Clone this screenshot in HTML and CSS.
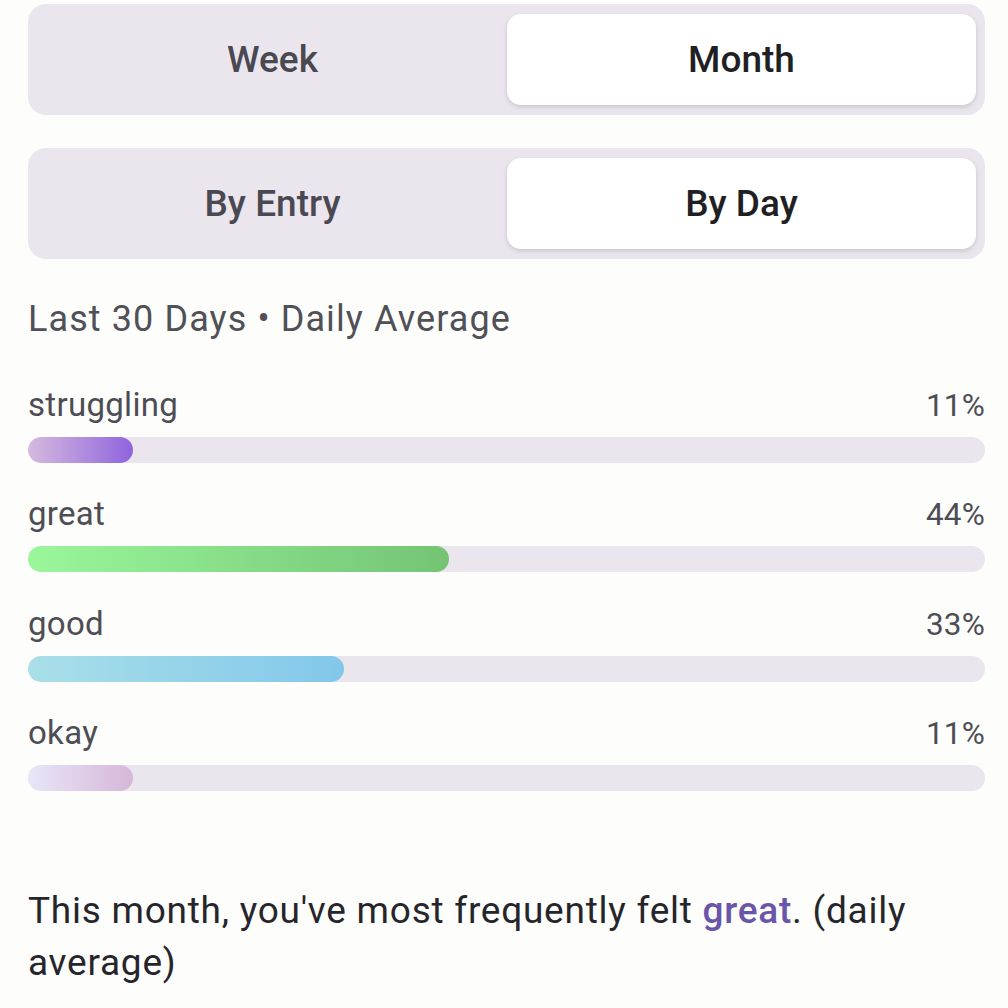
FILE: index.html
```html
<!DOCTYPE html>
<html lang="en">
<head>
<meta charset="utf-8">
<title>Mood summary</title>
<link rel="stylesheet" href="styles.css">
</head>
<body>
<main class="page">
  <div class="segmented">
    <div class="seg-item">Week</div>
    <div class="seg-item active">Month</div>
  </div>
  <div class="segmented">
    <div class="seg-item">By Entry</div>
    <div class="seg-item active">By Day</div>
  </div>

  <h2 class="subtitle">Last 30 Days • Daily Average</h2>

  <ul class="bars">
    <li class="bar-row">
      <div class="bar-head"><span class="bar-label">struggling</span><span class="bar-pct">11%</span></div>
      <div class="track"><div class="fill fill-struggling" style="width:11%"></div></div>
    </li>
    <li class="bar-row">
      <div class="bar-head"><span class="bar-label">great</span><span class="bar-pct">44%</span></div>
      <div class="track"><div class="fill fill-great" style="width:44%"></div></div>
    </li>
    <li class="bar-row">
      <div class="bar-head"><span class="bar-label">good</span><span class="bar-pct">33%</span></div>
      <div class="track"><div class="fill fill-good" style="width:33%"></div></div>
    </li>
    <li class="bar-row">
      <div class="bar-head"><span class="bar-label">okay</span><span class="bar-pct">11%</span></div>
      <div class="track"><div class="fill fill-okay" style="width:11%"></div></div>
    </li>
  </ul>

  <p class="summary">This month, you've most frequently felt <span class="highlight">great</span>. (daily average)</p>
</main>
</body>
</html>
```

FILE: styles.css
```css
html, body {
  margin: 0;
  padding: 0;
  background: #fdfdfc;
}

body {
  font-family: Roboto, "Noto Sans", sans-serif;
  color: #4a4950;
}

.page {
  padding: 4px 23px 0 28px;
  display: flex;
  flex-direction: column;
}

.segmented {
  display: grid;
  grid-template-columns: 1fr 1fr;
  padding: 10px 9px 10px 10px;
  background: #ebe6ee;
  border-radius: 18px;
  height: 91px;
  margin-bottom: 33px;
}

.seg-item {
  display: flex;
  align-items: center;
  justify-content: center;
  font-size: 37px;
  font-weight: 500;
  color: #4a4952;
  border-radius: 14px;
}

.seg-item.active {
  background: #ffffff;
  color: #1f1f24;
  box-shadow: 0 2px 5px rgba(60, 40, 80, 0.18);
}

.subtitle {
  margin: 5px 0 0;
  font-size: 36px;
  font-weight: 400;
  letter-spacing: 1.1px;
  color: #505057;
  line-height: 44px;
}

.bars {
  list-style: none;
  margin: 46px 0 0;
  padding: 0;
  display: flex;
  flex-direction: column;
  gap: 33.3px;
}

.bar-head {
  display: flex;
  justify-content: space-between;
  align-items: flex-end;
  height: 36px;
  color: #4e4d54;
  margin-bottom: 14px;
}

.bar-label {
  font-size: 33px;
  line-height: 36px;
  letter-spacing: 0.3px;
}

.bar-pct {
  font-size: 31.5px;
  line-height: 35px;
  letter-spacing: 0.2px;
}

.track {
  height: 26px;
  border-radius: 13px;
  background: #ebe6ee;
  overflow: hidden;
}

.fill {
  height: 100%;
  border-radius: 13px;
}

.fill-struggling { background: linear-gradient(90deg, #d6bade, #8f64de); }
.fill-great { background: linear-gradient(90deg, #9af79a, #74c474); }
.fill-good { background: linear-gradient(90deg, #a9dfe8, #82c7ea); }
.fill-okay { background: linear-gradient(90deg, #e8e6f8, #d6b7d8); }

.summary {
  margin: 94px 0 0;
  font-size: 37px;
  letter-spacing: 0.75px;
  line-height: 52px;
  color: #26252b;
}

.highlight {
  color: #6a55a8;
  font-weight: 500;
}
```
